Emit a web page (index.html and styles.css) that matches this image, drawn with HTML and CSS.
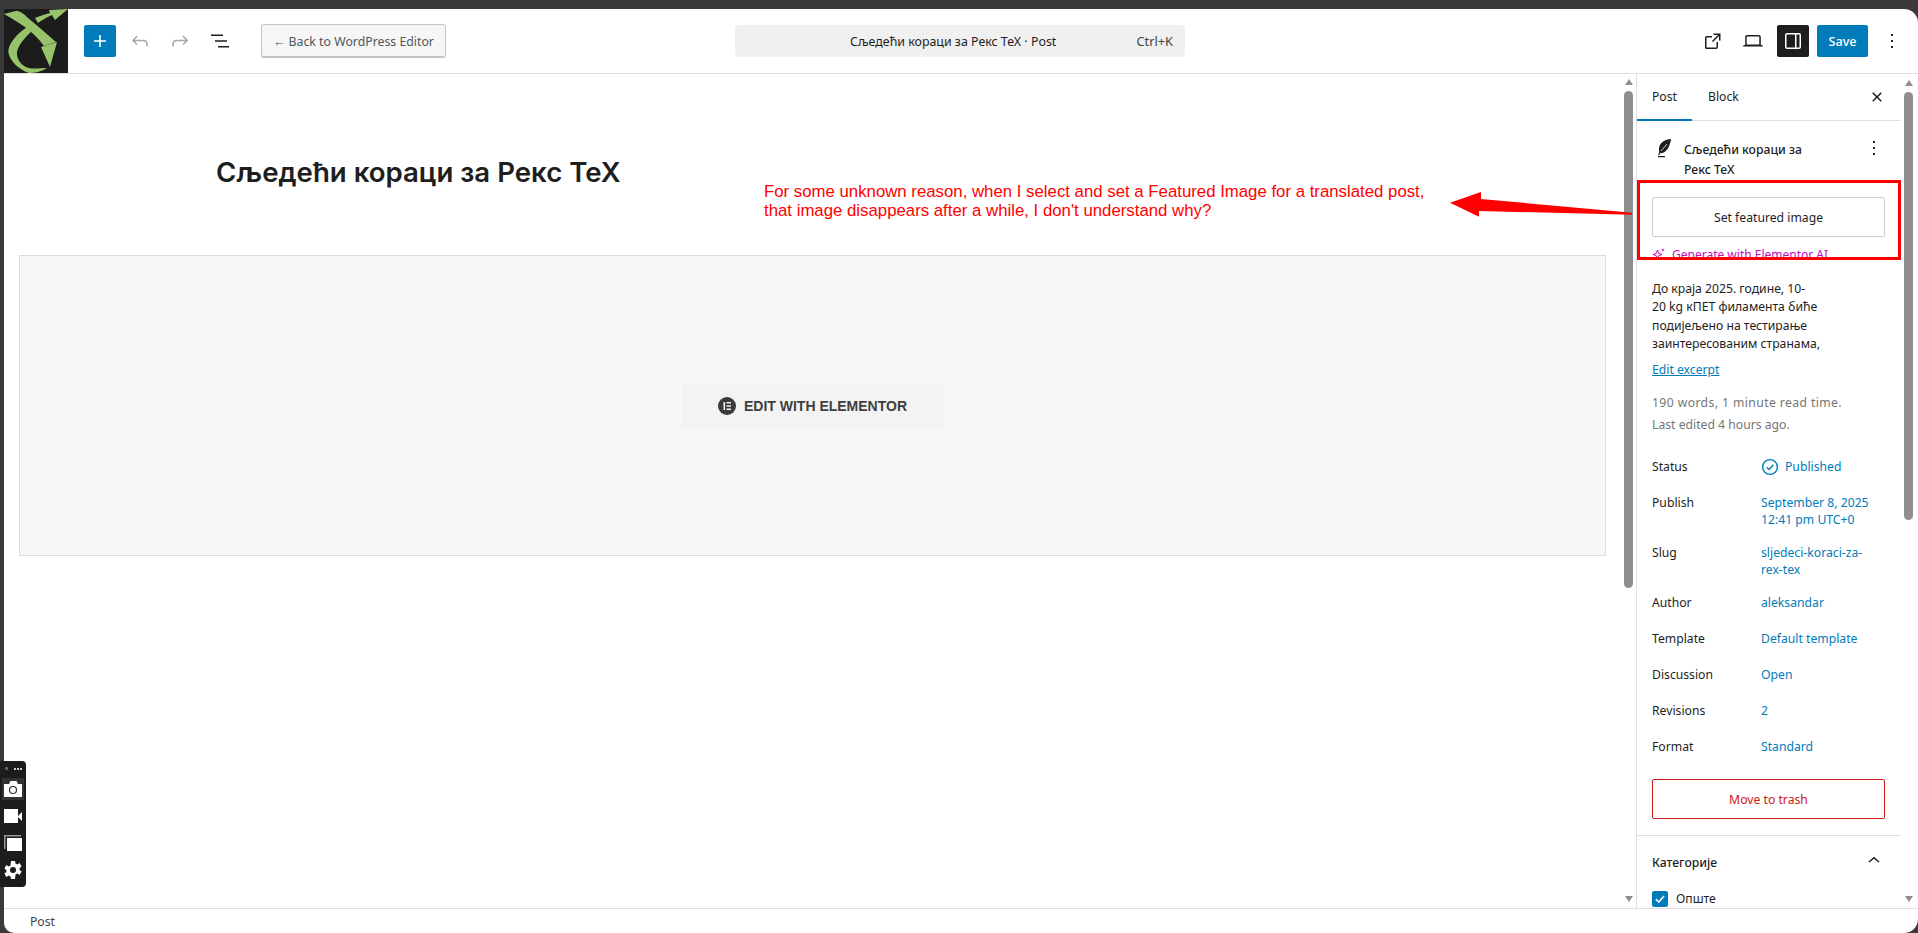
FILE: index.html
```html
<!DOCTYPE html>
<html lang="sr">
<head>
<meta charset="utf-8">
<title>Следећи кораци</title>
<link rel="stylesheet" href="styles.css">
</head>
<body>
<div class="window">
  <header class="topbar">
    <div class="logo">
      <svg viewBox="0 0 64 64" width="64" height="64">
        <rect width="64" height="64" fill="#1c1c1c"/>
        <path d="M0 5 L12.500 1.700 C18 3 21 6 24 9 C34 17 44 26 52 33 L40 37 C34 29 28 23 21 18 C14 13 7 9 0 5Z" fill="#97c46a"/>
        <path d="M31 9 C36 7 41 5 46 4 L45 1 L64 0 L51 11 L48 6 C43 8 38 11 34 14Z" fill="#97c46a"/>
        <path d="M23 18 L27 23 C18 31 12 40 13 46 C14 53 20 60 30 59.500 C35 59.500 40 59 43 59 C37 63 30 64 25 64 C16 61 8 54 5 46 C2 38 10 27 23 18Z" fill="#97c46a"/>
        <path d="M37 38 L53 33 L46 58Z" fill="#97c46a"/>
      </svg>
    </div>
    <div class="tools">
      <button class="btn-add" aria-label="Add">
        <svg viewBox="0 0 24 24" width="24" height="24"><path d="M11.200 6h1.600v5.200H18v1.600h-5.200V18h-1.600v-5.200H6v-1.600h5.200z" fill="#fff"/></svg>
      </button>
      <span class="tool"><svg viewBox="0 0 24 24" width="24" height="24"><path d="M18.300 11.700c-.6-.6-1.400-.9-2.300-.9H6.700l2.900-3.300-1.100-1-4.500 5L8.500 16l1-1-2.700-2.700H16c.5 0 .9.2 1.300.5 1 1 1 3.400 1 4.500v.3h1.500v-.2c0-1.500 0-4.300-1.500-5.700z" fill="#a6a6a6"/></svg></span>
      <span class="tool"><svg viewBox="0 0 24 24" width="24" height="24"><path d="M15.600 6.500l-1.100 1 2.900 3.300H8c-.9 0-1.700.3-2.300.9-1.400 1.500-1.400 4.200-1.400 5.700v.2h1.500v-.3c0-1.100 0-3.500 1-4.500.3-.3.7-.5 1.300-.5h9.200L14.600 15l1.100 1.100 4.600-4.600-4.700-5z" fill="#a6a6a6"/></svg></span>
      <span class="tool"><svg viewBox="0 0 24 24" width="24" height="24"><path d="M3 5.500h12V7H3zM7 11.200h12v1.500H7zM10 17h11v1.500H10z" fill="#1e1e1e"/></svg></span>
      <button class="btn-back">← Back to WordPress Editor</button>
    </div>
    <div class="center">
      <div class="command">
        <span class="command-title">Сљедећи кораци за Рекс ТеХ · Post</span>
        <span class="command-key">Ctrl+K</span>
      </div>
    </div>
    <div class="actions">
      <span class="tool"><svg viewBox="0 0 24 24" width="24" height="24"><path d="M19.500 4.500h-7V6h4.440l-5.970 5.970 1.060 1.060L18 7.060v4.440h1.500v-7zM5.500 7A2 2 0 0 0 4 9v9.500a1.500 1.500 0 0 0 1.500 1.500H15a2 2 0 0 0 2-2v-5h-1.500v5a.5.5 0 0 1-.5.5H6a.5.5 0 0 1-.5-.5V9a.5.5 0 0 1 .5-.5h5V7H6z" fill="#1e1e1e"/></svg></span>
      <span class="tool"><svg viewBox="0 0 24 24" width="24" height="24"><path d="M20.500 16h-.7V8c0-1.100-.9-2-2-2H6.200c-1.100 0-2 .9-2 2v8h-.7c-.8 0-1.500.7-1.500 1.500h20c0-.8-.7-1.500-1.500-1.500zM5.700 8c0-.3.2-.5.5-.5h11.600c.3 0 .5.2.5.5v7.600H5.700V8z" fill="#1e1e1e"/></svg></span>
      <span class="tool tool-on"><svg viewBox="0 0 24 24" width="24" height="24"><path d="M18 4H6a2 2 0 0 0-2 2v12a2 2 0 0 0 2 2h12a2 2 0 0 0 2-2V6a2 2 0 0 0-2-2zM5.500 18V6a.5.5 0 0 1 .5-.5h8v13H6a.5.5 0 0 1-.5-.5zm13 0a.5.5 0 0 1-.5.5h-2.500v-13H18a.5.5 0 0 1 .5.5z" fill="#fff"/></svg></span>
      <button class="btn-save">Save</button>
      <span class="kebab"><svg viewBox="0 0 24 24" width="24" height="24"><path d="M13 19h-2v-2h2zm0-6h-2v-2h2zm0-6h-2V5h2z" fill="#1e1e1e"/></svg></span>
    </div>
  </header>

  <div class="main">
    <div class="canvas">
      <div class="post">
        <h1 class="post-title">Сљедећи кораци за Рекс ТеХ</h1>
        <div class="elementor-box">
          <div class="elementor-btn">
            <svg viewBox="0 0 18 18" width="18" height="18"><circle cx="9" cy="9" r="9" fill="#3a3a3a"/><path d="M5.500 5h1.600v8H5.500zM8.500 5H13v1.500H8.500zM8.500 8.200H13v1.500H8.500zM8.500 11.500H13V13H8.500z" fill="#f3f3f3"/></svg>
            <span>EDIT WITH ELEMENTOR</span>
          </div>
        </div>
      </div>
      <div class="scroll scroll-editor">
        <span class="arrow-up"></span>
        <span class="thumb"></span>
        <span class="arrow-down"></span>
      </div>
    </div>

    <aside class="sidebar">
      <div class="side-scrollarea">
        <nav class="tabs">
          <span class="tab tab-on">Post</span>
          <span class="tab">Block</span>
          <span class="close"><svg viewBox="0 0 24 24" width="24" height="24"><path d="M12 13.060l3.712 3.713 1.061-1.060L13.061 12l3.712-3.712-1.060-1.060L12 10.938 8.288 7.227l-1.061 1.060L10.939 12l-3.712 3.712 1.060 1.061z" fill="#1e1e1e"/></svg></span>
        </nav>
        <div class="panel">
          <div class="post-head">
            <svg viewBox="0 0 24 24" width="24" height="24"><path d="M19 3C12 3.500 7.500 7 7 12.500c-.1 1.500 0 3 .3 4L6 18.800l1 .5 1.300-2C13 17.500 17.500 13 19 3z" fill="#1e1e1e"/><path d="M9 15l6-7" stroke="#fff" stroke-width=".8"/><path d="M6 20h7v1.300H6z" fill="#1e1e1e"/></svg>
            <strong class="post-name">Сљедећи кораци за Рекс ТеХ</strong>
            <span class="post-menu"><svg viewBox="0 0 24 24" width="24" height="24"><path d="M13 19h-2v-2h2zm0-6h-2v-2h2zm0-6h-2V5h2z" fill="#1e1e1e"/></svg></span>
          </div>
          <button class="btn-featured">Set featured image</button>
          <div class="ai-link">
            <svg viewBox="0 0 14 14" width="14" height="14"><path d="M5.500 3l1.200 3.300L10 7.500 6.700 8.700 5.500 12 4.300 8.700 1 7.500l3.300-1.200z" fill="none" stroke="#c00fbd" stroke-width="1"/><path d="M11 1l.5 1.500L13 3l-1.500.5L11 5l-.5-1.500L9 3l1.500-.5z" fill="#c00fbd"/></svg>
            <span>Generate with Elementor AI</span>
          </div>
          <p class="excerpt">До краја 2025. године, 10-<br>20 kg кПЕТ филамента биће<br>подијељено на тестирање<br>заинтересованим странама,</p>
          <a class="edit-excerpt">Edit excerpt</a>
          <p class="stats"><span class="stats-words">190 words, 1 minute read time.</span><br>Last edited 4 hours ago.</p>
          <dl class="meta">
            <div class="row"><dt>Status</dt><dd class="dd-status"><svg viewBox="0 0 18 18" width="18" height="18"><circle cx="9" cy="9" r="7.400" fill="none" stroke="#007cba" stroke-width="1.400"/><path d="M5.800 9.300l2.300 2.200 4.200-4.800" fill="none" stroke="#007cba" stroke-width="1.400"/></svg>Published</dd></div>
            <div class="row row-wrap"><dt>Publish</dt><dd>September 8, 2025<br>12:41 pm UTC+0</dd></div>
            <div class="row row-wrap"><dt>Slug</dt><dd>sljedeci-koraci-za-<br>rex-tex</dd></div>
            <div class="row"><dt>Author</dt><dd>aleksandar</dd></div>
            <div class="row"><dt>Template</dt><dd>Default template</dd></div>
            <div class="row"><dt>Discussion</dt><dd>Open</dd></div>
            <div class="row"><dt>Revisions</dt><dd>2</dd></div>
            <div class="row"><dt>Format</dt><dd>Standard</dd></div>
          </dl>
          <button class="btn-trash">Move to trash</button>
        </div>
        <section class="cats">
          <div class="cats-head">
            <strong>Категорије</strong>
            <svg viewBox="0 0 24 24" width="24" height="24"><path d="M6.500 13.400L12 8.800l5.500 4.600-.9 1L12 10.700l-4.600 3.700z" fill="#1e1e1e"/></svg>
          </div>
          <label class="cat"><span class="check"><svg viewBox="0 0 16 16" width="16" height="16"><path d="M3.800 8.200l3 2.800 5.200-6" fill="none" stroke="#fff" stroke-width="1.600"/></svg></span>Опште</label>
        </section>
      </div>
      <div class="scroll scroll-side">
        <span class="arrow-up"></span>
        <span class="thumb"></span>
        <span class="arrow-down"></span>
      </div>
    </aside>
  </div>

  <footer class="statusbar">Post</footer>
</div>

<div class="note">For some unknown reason, when I select and set a Featured Image for a translated post,<br>that image disappears after a while, I don't understand why?</div>
<svg class="note-arrow" viewBox="0 0 182 25" width="182" height="25"><path d="M0 10.700L31 0v7l151 13.700v2L29 19v5.700z" fill="#f00"/></svg>
<div class="note-box"></div>

<div class="capture">
  <div class="capture-head"><i class="dot"></i><i class="dots"></i></div>
  <div class="capture-item capture-on"><svg viewBox="0 0 20 20" width="20" height="20"><path d="M1 5h5l1.500-3h6L15 5h4v13H1z" fill="#fff"/><circle cx="10" cy="11" r="3.500" fill="#fff" stroke="#333" stroke-width="1.200"/></svg></div>
  <div class="capture-item"><svg viewBox="0 0 20 20" width="20" height="20"><path d="M1 3h14v14H1zM15 10l4-4v9l-4-4z" fill="#fff"/></svg></div>
  <div class="capture-item"><svg viewBox="0 0 20 20" width="20" height="20"><path d="M1 16V2h17v1.500H2.500V16z" fill="#9a9a9a"/><path d="M4 5h15v13H4z" fill="#fff"/></svg></div>
  <div class="capture-item"><svg viewBox="0 0 20 20" width="20" height="20"><path d="M8 1h4l.5 2.600 1.800.8 2.300-1.400 2 3.400-2 1.600v2l2 1.600-2 3.400-2.300-1.400-1.800.8L12 19H8l-.5-2.600-1.800-.8L3.400 17l-2-3.400 2-1.600v-2l-2-1.600 2-3.400 2.300 1.400 1.800-.8z" fill="#fff"/><circle cx="10" cy="10" r="3" fill="#1c1c1c"/></svg></div>
</div>
</body>
</html>
```
FILE: styles.css
```css
* { box-sizing: border-box; }
html, body { margin: 0; height: 100%; overflow: hidden; background: #3a3a3a; }
body { font-family: "Noto Sans", "Open Sans", sans-serif; font-size: 12.200px; color: #1e1e1e; padding-top: 9px; }
button { font-family: inherit; cursor: pointer; }
svg { display: block; flex: none; }

.window { height: 924px; margin-left: 4px; background: #fff; border-radius: 0 14px 14px 10px; display: flex; flex-direction: column; overflow: hidden; }

.topbar { height: 65px; flex: none; display: flex; align-items: center; border-bottom: 1px solid #e0e0e0; }
.logo { width: 64px; height: 64px; align-self: flex-start; }
.tools { display: flex; align-items: center; margin-left: 16px; }
.btn-add { width: 32px; height: 32px; padding: 4px; border: 0; border-radius: 2px; background: #007cba; margin-right: 8px; }
.tool { width: 32px; height: 32px; padding: 4px; margin-right: 8px; border-radius: 2px; }
.btn-back { width: 185px; height: 34px; margin-left: 17px; padding: 1px 0 0; background: #f6f6f6; border: 1px solid #c5c5c5; border-bottom-width: 2px; border-radius: 3px; color: #50575e; font-size: 12.300px; }
.center { margin-left: 289px; }
.command { width: 450px; height: 32px; background: #f0f0f0; border-radius: 4px; display: flex; align-items: center; padding: 0 12px 0 115px; font-size: 12.400px; }
.command-title { flex: 1; }
.command-key { color: #444; font-size: 12.800px; }
.actions { margin-left: auto; display: flex; align-items: center; }
.tool-on { background: #1e1e1e; }
.btn-save { width: 51px; height: 32px; border: 0; border-radius: 2px; background: #007cba; color: #fff; font-size: 12.600px; font-weight: 500; padding: 0; }
.kebab { width: 24px; margin: 0 14px 0 12px; }

.main { flex: 1; min-height: 0; display: flex; }
.canvas { flex: 1; min-width: 0; display: flex; }
.post { flex: 1; padding: 81px 17px 0 15px; }
.post-title { margin: 0 0 0 197px; font: 600 27.600px/1.250 Inter, "Liberation Sans", sans-serif; color: #1e1e1e; height: 100px; }
.elementor-box { height: 301px; background: #f7f7f7; border: 1px solid #ddd; display: flex; align-items: center; justify-content: center; }
.elementor-btn { width: 261px; height: 46px; background: #f3f3f3; display: flex; align-items: center; justify-content: center; gap: 8px; font: 700 14px "Liberation Sans", Arial, sans-serif; color: #3f3f3f; }

.scroll { flex: none; display: flex; flex-direction: column; align-items: center; }
.scroll-editor { width: 11px; margin-right: 2px; padding-top: 5px; }
.scroll-side { width: 17px; padding: 6px 2px 0 0; }
.arrow-up, .arrow-down { width: 0; height: 0; border-left: 4px solid transparent; border-right: 4px solid transparent; flex: none; }
.arrow-up { border-bottom: 6px solid #8f8f8f; }
.arrow-down { border-top: 6px solid #8f8f8f; margin-top: auto; margin-bottom: 6px; }
.thumb { width: 9px; border-radius: 5px; background: #8f8f8f; margin-top: 6px; }
.scroll-editor .thumb { height: 497px; }
.scroll-side .thumb { height: 428px; }

.sidebar { width: 282px; flex: none; display: flex; border-left: 1px solid #e0e0e0; }
.side-scrollarea { flex: 1; min-width: 0; overflow: hidden; }
.tabs { height: 47px; display: flex; align-items: center; border-bottom: 1px solid #e0e0e0; }
.tab { height: 47px; padding: 0 16px; line-height: 46px; }
.tab-on { width: 55px; padding: 0 15px; border-bottom: 2px solid #007cba; }
.close { margin-left: auto; margin-right: 12px; width: 24px; height: 24px; }

.panel { padding: 15px 16px 16px 15px; border-bottom: 1px solid #e0e0e0; }
.post-head { display: flex; align-items: flex-start; gap: 8px; height: 44px; }
.post-name { font-weight: 500; line-height: 20px; width: 135px; margin-top: 4px; }
.post-menu { margin-left: auto; margin-right: -1px; }
.btn-featured { display: block; width: 100%; height: 40px; margin-top: 17px; background: #fff; border: 1px solid #ccc; border-radius: 2px; color: #1e1e1e; font-size: 12.200px; }
.ai-link { display: flex; align-items: center; gap: 6px; margin-top: 9px; height: 16px; color: #c00fbd; font-size: 12px; }
.excerpt { margin: 18px 0 0; line-height: 18.300px; }
.edit-excerpt { display: block; margin-top: 8px; color: #007cba; text-decoration: underline; line-height: 18px; }
.stats { margin: 13px 0 0; color: #757575; line-height: 22px; }
.stats-words { letter-spacing: .4px; }
.meta { margin: 22px 0 0; }
.row { display: flex; height: 36px; }
.row dt { width: 109px; flex: none; line-height: 18px; }
.row dd { margin: 0; color: #007cba; line-height: 17px; }
.row .dd-status { display: flex; gap: 6px; line-height: 18px; }
.row-wrap { height: 50px; }
.btn-trash { display: block; width: 100%; height: 40px; margin-top: 5px; background: #fff; border: 1px solid #cc1818; border-radius: 2px; color: #cc1818; font-size: 12.200px; }

.cats { padding: 14px 16px 0 15px; }
.cats-head { display: flex; justify-content: space-between; align-items: center; height: 24px; }
.cats-head strong { font-weight: 500; }
.cats-head svg { margin-right: -1px; margin-top: -4px; }
.cat { display: flex; align-items: center; gap: 8px; margin-top: 16px; }
.check { width: 16px; height: 16px; background: #007cba; border-radius: 2px; }

.statusbar { height: 25px; flex: none; border-top: 1px solid #e0e0e0; padding-left: 26px; line-height: 26px; color: #444; }

.note { position: absolute; left: 764px; top: 183px; font: 16.800px/18.500px "Liberation Sans", Arial, sans-serif; color: #f00; }
.note-arrow { position: absolute; left: 1450px; top: 192px; }
.note-box { position: absolute; left: 1637px; top: 180px; width: 264px; height: 80px; border: 3px solid #f00; }

.capture { position: absolute; left: 0; top: 761px; width: 26px; height: 126px; background: #1c1c1c; border-radius: 0 4px 4px 0; display: flex; flex-direction: column; align-items: center; gap: 5px; }
.capture-head { height: 9px; margin-top: 3px; width: 100%; display: flex; align-items: center; justify-content: center; gap: 6px; }
.dot { width: 3px; height: 3px; border-radius: 50%; border: 1px solid #aaa; }
.dots { width: 8px; height: 2px; background: repeating-linear-gradient(90deg, #ccc 0 2px, transparent 2px 3px); }
.capture-item { width: 22px; height: 22px; padding: 1px; }
.capture-on { background: #333; }
```
